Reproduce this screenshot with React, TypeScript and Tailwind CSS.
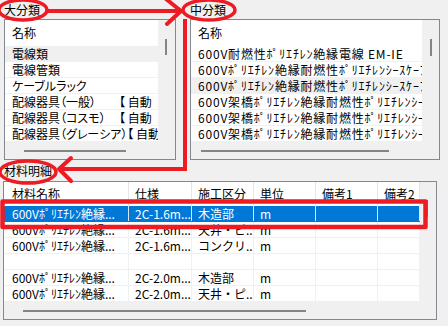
import React from "react";

const leftRows: { name: string; tail?: string }[] = [
  { name: "電線類" },
  { name: "電線管類" },
  { name: "ケーブルラック" },
  { name: "配線器具（一般）", tail: "【 自動" },
  { name: "配線器具（コスモ）", tail: "【 自動" },
  { name: "配線器具（グレーシア）", tail: "【 自動" },
];

const rightRows = [
  "600V耐燃性ﾎﾟﾘｴﾁﾚﾝ絶縁電線 EM-IE",
  "600Vﾎﾟﾘｴﾁﾚﾝ絶縁耐燃性ﾎﾟﾘｴﾁﾚﾝｼｰｽｹｰﾌﾞﾙ",
  "600Vﾎﾟﾘｴﾁﾚﾝ絶縁耐燃性ﾎﾟﾘｴﾁﾚﾝｼｰｽｹｰﾌﾞﾙ",
  "600V架橋ﾎﾟﾘｴﾁﾚﾝ絶縁耐燃性ﾎﾟﾘｴﾁﾚﾝｼｰｽｹｰﾌﾞﾙ",
  "600V架橋ﾎﾟﾘｴﾁﾚﾝ絶縁耐燃性ﾎﾟﾘｴﾁﾚﾝｼｰｽｹｰﾌﾞﾙ",
  "600V架橋ﾎﾟﾘｴﾁﾚﾝ絶縁耐燃性ﾎﾟﾘｴﾁﾚﾝｼｰｽｹｰﾌﾞﾙ",
];

const tableRows: string[][] = [
  ["600Vﾎﾟﾘｴﾁﾚﾝ絶縁...", "2C-1.6m...", "木造部", "m", "", ""],
  ["600Vﾎﾟﾘｴﾁﾚﾝ絶縁...", "2C-1.6m...", "天井・ピ...", "m", "", ""],
  ["600Vﾎﾟﾘｴﾁﾚﾝ絶縁...", "2C-1.6m...", "コンクリ...", "m", "", ""],
  ["", "", "", "", "", ""],
  ["600Vﾎﾟﾘｴﾁﾚﾝ絶縁...", "2C-2.0m...", "木造部", "m", "", ""],
  ["600Vﾎﾟﾘｴﾁﾚﾝ絶縁...", "2C-2.0m...", "天井・ピ...", "m", "", ""],
];

const headers = ["材料名称", "仕様", "施工区分", "単位", "備考1", "備考2"];

export default function App() {
  return (
    <div className="relative w-[448px] h-[326px] bg-[#f0f0f0] overflow-hidden font-['Noto_Sans_CJK_JP','Noto_Sans',sans-serif] text-[12px] text-black">
      <div className="flex">
        {/* 大分類 */}
        <div className="ml-[4px] w-[172px]">
          <div className="h-[19px] pt-[3px] leading-[14px]">大分類</div>
          <div className="h-[141px] border border-[#828790] bg-[#f0f0f0] flex flex-col">
            <div className="flex flex-1 min-h-0">
              <div className="flex-1 bg-white overflow-hidden [font-feature-settings:'palt']">
                <div className="h-[26px] pl-[7px] pt-[6px] leading-[14px]">名称</div>
                {leftRows.map((r, i) => (
                  <div
                    key={i}
                    className={
                      "h-[16px] leading-[15px] pl-[7px] whitespace-nowrap flex border-b border-[#f0f0f0] " +
                      (i === 0 ? "bg-[#f0f0f0]" : "")
                    }
                  >
                    <span className="min-w-[107px] shrink-0">{r.name}</span>
                    {r.tail && <span className="shrink-0">{r.tail}</span>}
                  </div>
                ))}
              </div>
              <div className="w-[17px] pt-[19px] pl-[7px]">
                <div className="w-[2px] h-[16px] bg-[#858585]" />
              </div>
            </div>
            <div className="h-[17px] pt-[8px] pl-[19px]">
              <div className="w-[102px] h-[2px] bg-[#858585]" />
            </div>
          </div>
        </div>

        {/* 中分類 */}
        <div className="ml-[14px] w-[250px]">
          <div className="h-[19px] pt-[3px] leading-[14px]">中分類</div>
          <div className="h-[141px] border border-[#828790] bg-[#f0f0f0] flex flex-col">
            <div className="flex flex-1 min-h-0">
              <div className="flex-1 bg-white overflow-hidden">
                <div className="h-[26px] pl-[7px] pt-[6px] leading-[14px]">名称</div>
                {rightRows.map((r, i) => (
                  <div
                    key={i}
                    className={
                      "h-[16px] leading-[15px] pl-[7px] whitespace-nowrap tracking-[0.8px] border-b border-[#f0f0f0] " +
                      (i === 2 ? "bg-[#f0f0f0]" : "")
                    }
                  >
                    {r}
                  </div>
                ))}
              </div>
              <div className="w-[17px] pt-[19px] pl-[8px]">
                <div className="w-[2px] h-[17px] bg-[#858585]" />
              </div>
            </div>
            <div className="h-[17px] pt-[8px] pl-[10px]">
              <div className="w-[188px] h-[2px] bg-[#858585]" />
            </div>
          </div>
        </div>
      </div>

      {/* 材料明細 */}
      <div className="h-[21px] pl-[4px] pt-[4px] leading-[14px]">材料明細</div>
      <div className="ml-[3px] w-[434px] h-[139px] border border-[#828790] bg-[#f0f0f0] flex flex-col">
        <div className="flex flex-1 min-h-0">
          <div className="w-[416px] bg-white overflow-hidden">
            <div className="grid grid-cols-[125px_63px_62px_62px_62px_42px] h-[24px]">
              {headers.map((h, i) => (
                <div
                  key={i}
                  className={
                    "border-r border-[#e5e5e5] pt-[5px] leading-[14px] whitespace-nowrap overflow-hidden " +
                    (i === 0 ? "pl-[8px]" : "pl-[6px]")
                  }
                >
                  {h}
                </div>
              ))}
            </div>
            {tableRows.map((row, ri) => (
              <div
                key={ri}
                className={
                  "grid grid-cols-[125px_63px_62px_62px_62px_42px] h-[16px] border-b " +
                  (ri === 0
                    ? "bg-[#0078d7] text-white border-[#0078d7]"
                    : "border-[#f0f0f0]")
                }
              >
                {row.map((c, ci) => (
                  <div
                    key={ci}
                    className={
                      "border-r leading-[15px] whitespace-nowrap overflow-hidden " +
                      (ri === 0 ? "border-[#d8e8f8] " : "border-[#f0f0f0] ") +
                      (ci === 0 ? "pl-[8px]" : "pl-[6px]")
                    }
                  >
                    {c}
                  </div>
                ))}
              </div>
            ))}
          </div>
          <div className="flex-1 pt-[18px] pl-[6px]">
            <div className="w-[2px] h-[17px] bg-[#858585]" />
          </div>
        </div>
        <div className="h-[17px] pt-[8px] pl-[19px]">
          <div className="w-[283px] h-[2px] bg-[#858585]" />
        </div>
      </div>

      {/* red annotations */}
      <svg
        className="absolute inset-0 pointer-events-none"
        width="448"
        height="326"
        viewBox="0 0 448 326"
        fill="none"
        stroke="#ed1c24"
        strokeLinecap="round"
        strokeLinejoin="round"
      >
        <ellipse cx="23" cy="10" rx="24" ry="10" strokeWidth="3.5" />
        <path d="M47 11 L181 11" strokeWidth="4" />
        <path d="M166 -1 L181 11 L167 24" strokeWidth="4" />
        <ellipse cx="209" cy="10" rx="26" ry="10" strokeWidth="3.5" />
        <path d="M185 19 L185 169 L60 169" strokeWidth="4" strokeLinecap="butt" strokeLinejoin="miter" />
        <path d="M71 158 L59 169 L71 181" strokeWidth="4" />
        <ellipse cx="28" cy="172" rx="28" ry="11" strokeWidth="3.5" />
        <rect x="2.5" y="201.5" width="423" height="25.5" strokeWidth="4.5" />
      </svg>
    </div>
  );
}
